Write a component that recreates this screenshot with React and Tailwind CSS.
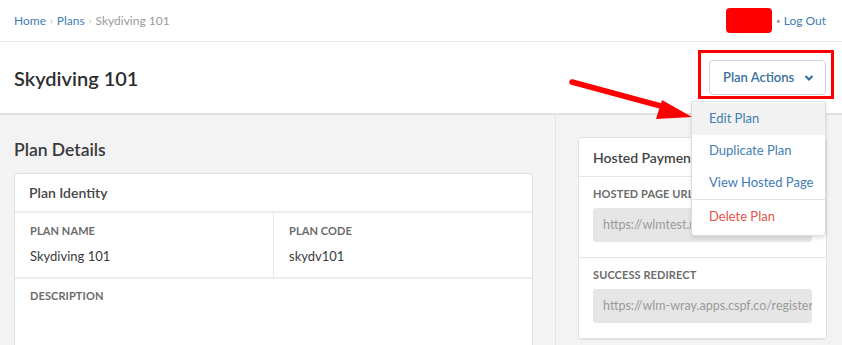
import React from "react";

const Field = ({ label, value, className = "" }) => (
  <div className={`px-[15px] pt-[11px] ${className}`}>
    <p className="text-[11px] font-bold uppercase tracking-[0.1px] leading-[14px] text-[#6b6b6b]">{label}</p>
    <p className="mt-[9px] text-[13px] leading-[18px] text-[#3a3a3a]">{value}</p>
  </div>
);

const UrlField = ({ label, value }) => (
  <div className="px-[14px] pt-[10px] pb-[15px]">
    <p className="text-[11px] font-bold uppercase tracking-[0.1px] leading-[14px] text-[#6b6b6b]">{label}</p>
    <div className="mt-[7px] h-[34px] w-full overflow-hidden whitespace-nowrap rounded-[3px] bg-[#e6e6e6] px-[10px] text-[12.5px] leading-[34px] text-[#9a9a9a]">
      {value}
    </div>
  </div>
);

export default function App() {
  return (
    <div className="relative h-[345px] w-[842px] overflow-hidden bg-white font-['Lato','Noto_Sans',sans-serif] text-[#333]">
      {/* top bar */}
      <div className="flex h-[42px] items-center justify-between border-b border-[#e8e8e8] px-[14px]">
        <div className="flex items-center gap-[4px] text-[12px]">
          <span className="text-[#3f7db3]">Home</span>
          <span className="text-[10px] text-[#b5b5b5]">›</span>
          <span className="text-[#3f7db3]">Plans</span>
          <span className="text-[10px] text-[#b5b5b5]">›</span>
          <span className="text-[#9a9a9a]">Skydiving 101</span>
        </div>
        <div className="flex items-center gap-[3px] pr-[2px] text-[12px]">
          <div className="mr-[1px] h-[25px] w-[46px] rounded-[4px] bg-[#ff0000]" />
          <span className="text-[8px] text-[#999]">•</span>
          <span className="text-[#3f7db3]">Log Out</span>
        </div>
      </div>

      {/* page header */}
      <div className="flex h-[73px] items-center justify-between border-b-2 border-[#e2e2e2] px-[14px]">
        <h1 className="text-[20px] font-semibold text-[#2e2e2e]">Skydiving 101</h1>
        <button className="mr-[2px] flex h-[35px] w-[117px] items-center justify-between rounded-[4px] border border-[#c9d6e2] bg-white pl-[13px] pr-[11px] text-[13px] font-semibold text-[#3a6f9b]">
          Plan Actions
          <svg width="10" height="8" viewBox="0 0 10 8">
            <path d="M1.5 2 L5 5.5 L8.5 2" fill="none" stroke="#3a6f9b" strokeWidth="2.2" />
          </svg>
        </button>
      </div>

      {/* body */}
      <div className="flex h-full bg-[#f3f3f3]">
        <div className="w-[556px] shrink-0 border-r border-[#e3e3e3] pl-[14px] pr-[22px] pt-[22px]">
          <h2 className="text-[17.5px] font-semibold text-[#3a3a3a]">Plan Details</h2>
          <div className="mt-[10px] rounded-[4px] border border-[#e0e0e0] bg-white">
            <div className="flex h-[39px] items-center border-b-2 border-[#ececec] px-[14px] text-[14px] font-semibold text-[#444]">
              Plan Identity
            </div>
            <div className="grid h-[66px] grid-cols-[259px_1fr] border-b-2 border-[#ececec]">
              <Field label="Plan Name" value="Skydiving 101" className="border-r border-[#e6e6e6]" />
              <Field label="Plan Code" value="skydv101" />
            </div>
            <div className="h-[80px] px-[15px] pt-[10px]">
              <p className="text-[11px] font-bold uppercase tracking-[0.1px] leading-[14px] text-[#6b6b6b]">Description</p>
            </div>
          </div>
        </div>

        <div className="w-[286px] shrink-0 pl-[22px] pr-[15px] pt-[22px]">
          <div className="w-[249px] overflow-hidden rounded-[4px] border border-[#e0e0e0] bg-white">
            <div className="flex h-[39px] items-center border-b border-[#e6e6e6] px-[14px] text-[14px] font-semibold text-[#444]">
              Hosted Payment
            </div>
            <div className="border-b border-[#e6e6e6]">
              <UrlField label="Hosted Page URL" value="https://wlmtest.myrecurly.com/subscribe/skydv101" />
            </div>
            <div className="border-b border-[#e6e6e6]">
              <UrlField label="Success Redirect" value="https://wlm-wray.apps.cspf.co/register" />
            </div>
          </div>
        </div>
      </div>

      {/* dropdown menu */}
      <div className="absolute left-[691px] top-[101px] w-[135px] whitespace-nowrap rounded-b-[4px] border border-[#dedede] bg-white py-[1px] text-[13px] shadow-[0_2px_4px_rgba(0,0,0,0.12)]">
        <div className="flex h-[32px] items-center bg-[#f2f2f2] px-[17px] text-[#3f7db3]">Edit Plan</div>
        <div className="flex h-[32px] items-center px-[17px] text-[#3f7db3]">Duplicate Plan</div>
        <div className="flex h-[32px] items-center px-[17px] text-[#3f7db3]">View Hosted Page</div>
        <div className="flex h-[35px] items-center border-t border-[#e3e3e3] px-[17px] text-[#e5534b]">Delete Plan</div>
      </div>

      {/* annotation box */}
      <div className="pointer-events-none absolute left-[698px] top-[50px] h-[49px] w-[136px] border-[3px] border-[#ff0000]" />

      {/* annotation arrow */}
      <svg className="pointer-events-none absolute left-0 top-0" width="842" height="345">
        <line x1="572" y1="82" x2="668" y2="108" stroke="#ff0000" strokeWidth="5.5" strokeLinecap="round" />
        <polygon points="692,117 662,100 656,119" fill="#ff0000" />
      </svg>
    </div>
  );
}
